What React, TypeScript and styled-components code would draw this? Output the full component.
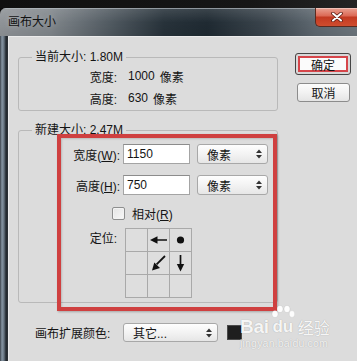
import React from "react";
import styled, { createGlobalStyle } from "styled-components";

const GlobalStyle = createGlobalStyle`
  html, body { margin: 0; padding: 0; background: #0c0c0c; }
  body {
    font-family: "Liberation Sans", "Noto Sans CJK SC", sans-serif;
    font-size: 12px;
    color: #141414;
  }
  * { box-sizing: border-box; }
`;

const Screen = styled.div`
  width: 357px;
  height: 361px;
  overflow: hidden;
  display: flex;
  flex-direction: column;
  background: #0c0c0c;
`;

const TopStrip = styled.div`
  height: 8px;
  flex: none;
  background: linear-gradient(90deg, #101010 0%, #161616 70%, #242424 100%);
`;

const Window = styled.div`
  flex: 1;
  min-height: 0;
  display: flex;
  flex-direction: column;
  border-top-left-radius: 6px;
  overflow: hidden;
`;

const TitleBar = styled.div`
  height: 28px;
  flex: none;
  display: flex;
  align-items: flex-start;
  border-top: 1px solid rgba(190, 196, 202, 0.7);
  background:
    linear-gradient(180deg, rgba(255,255,255,0.12) 0%, rgba(255,255,255,0) 50%, rgba(0,0,0,0.06) 100%),
    linear-gradient(90deg, #8f9397 0%, #80868b 14%, #535c63 30%, #27323a 46%, #1f2a32 58%, #3a444c 74%, #5d676f 88%, #6d767d 100%);
`;

const Title = styled.div`
  padding-left: 8px;
  line-height: 27px;
  font-size: 12px;
  color: #121212;
  text-shadow: 0 0 6px rgba(255, 255, 255, 0.35);
`;

const CloseButton = styled.div`
  margin-left: auto;
  margin-top: -1px;
  width: 42px;
  height: 19px;
  display: flex;
  align-items: center;
  justify-content: center;
  border: 1px solid #5b2a20;
  border-top: none;
  border-right: none;
  border-radius: 0 0 0 5px;
  background: linear-gradient(180deg, #e9a192 0%, #dc6b57 42%, #c33a22 52%, #cf4d2f 100%);
  box-shadow: inset 0 1px 0 rgba(255, 255, 255, 0.35);
`;

const BodyRow = styled.div`
  flex: 1;
  min-height: 0;
  display: flex;
`;

const FrameSide = styled.div`
  width: 8px;
  flex: none;
  background: linear-gradient(90deg, #3b424a 0px, #8796a4 2px, #66737f 4px, #22282e 6px, #2c3136 8px);
`;

const Client = styled.div`
  flex: 1;
  position: relative;
  display: flex;
  align-items: flex-start;
  background: #dcdcdc;
  border-top: 1px solid #ececec;
  border-left: 1px solid #ececec;
`;

const LeftColumn = styled.div`
  display: flex;
  flex-direction: column;
  padding: 13px 0 0 9px;
`;

const RightColumn = styled.div`
  display: flex;
  flex-direction: column;
  align-items: flex-start;
  padding: 16px 0 0 17px;
`;

const Group = styled.fieldset<{ $padTop: number; $padBottom: number; $gap?: number }>`
  margin: ${(p) => p.$gap ?? 0}px 0 0 0;
  padding: ${(p) => p.$padTop}px 0 ${(p) => p.$padBottom}px 0;
  width: 260px;
  min-width: 0;
  border: 1px solid #b9b9b9;
  border-radius: 3px;
`;

const Legend = styled.legend`
  margin-left: 13px;
  padding: 0 3px;
  line-height: 14px;
  font-size: 12px;
  color: #141414;
`;

const InfoRow = styled.div`
  display: flex;
  align-items: center;
  height: 22px;
`;

const InfoLabel = styled.span`
  width: 98px;
  text-align: right;
`;

const InfoValue = styled.span`
  margin-left: 11px;
`;

const InfoUnit = styled.span`
  margin-left: 5px;
`;

const FieldRow = styled.div<{ $top: number }>`
  display: flex;
  align-items: center;
  height: 20px;
  margin-top: ${(p) => p.$top}px;
`;

const FieldLabel = styled.span`
  width: 101px;
  text-align: right;
`;

const Key = styled.span`
  text-decoration: underline;
  text-underline-offset: 1px;
`;

const TextInput = styled.input`
  width: 67px;
  height: 20px;
  margin: 0 0 0 3px;
  padding: 0 0 0 3px;
  border: 1px solid #a4a4a4;
  border-top-color: #8c8c8c;
  background: #ffffff;
  font-family: inherit;
  font-size: 12px;
  color: #141414;
  outline: none;
`;

const SelectBox = styled.div<{ $w: number; $h: number; $left: number }>`
  width: ${(p) => p.$w}px;
  height: ${(p) => p.$h}px;
  margin-left: ${(p) => p.$left}px;
  display: flex;
  align-items: center;
  justify-content: space-between;
  padding: 0 5px 0 9px;
  border: 1px solid #a8a8a8;
  border-radius: 3px;
  background: linear-gradient(180deg, #fefefe 0%, #f3f3f3 50%, #e6e6e6 100%);
`;

const CheckRow = styled.div`
  display: flex;
  align-items: center;
  height: 16px;
  margin-top: 10px;
  padding-left: 93px;
`;

const CheckBox = styled.span`
  width: 13px;
  height: 13px;
  border: 1px solid #8e8f8f;
  border-radius: 2px;
  background: linear-gradient(135deg, #e4e4e4 0%, #f8f8f8 100%);
  box-shadow: inset 0 0 0 1px #f3f3f3;
`;

const CheckLabel = styled.span`
  margin-left: 7px;
`;

const AnchorRow = styled.div`
  display: flex;
  align-items: flex-start;
  margin-top: 7px;
`;

const AnchorLabel = styled.span`
  width: 98px;
  text-align: right;
  line-height: 22px;
`;

const AnchorGrid = styled.div`
  margin-left: 8px;
  display: grid;
  grid-template-columns: repeat(3, 21px);
  grid-auto-rows: 22px;
  gap: 1px;
  padding: 1px;
  background: #a9a9a9;
`;

const AnchorCell = styled.div`
  display: flex;
  align-items: center;
  justify-content: center;
  background: #dedede;
`;

const BottomRow = styled.div`
  display: flex;
  align-items: center;
  height: 19px;
  margin-top: 20px;
  padding-left: 17px;
`;

const BottomLabel = styled.span`
  width: 82px;
`;

const Swatch = styled.span`
  width: 15px;
  height: 15px;
  margin-left: 9px;
  background: #1e1e1e;
  border: 1px solid #4a4a4a;
`;

const DialogButton = styled.div<{ $primary?: boolean; $w: number; $h: number; $top: number; $left: number }>`
  width: ${(p) => p.$w}px;
  height: ${(p) => p.$h}px;
  margin-top: ${(p) => p.$top}px;
  margin-left: ${(p) => p.$left}px;
  display: flex;
  align-items: center;
  justify-content: center;
  border: 1px solid ${(p) => (p.$primary ? "#454545" : "#8c8c8c")};
  border-radius: 3px;
  background: ${(p) =>
    p.$primary ? "#fbfbfb" : "linear-gradient(180deg, #fcfcfc 0%, #f2f2f2 50%, #e4e4e4 100%)"};
  box-shadow: ${(p) => (p.$primary ? "inset 0 0 0 2px #d8d8d8, inset 0 0 0 4px #d6454a" : "none")};
  font-size: 12px;
  color: #141414;
`;

const Annotation = styled.div`
  position: absolute;
  left: 48px;
  top: 97px;
  width: 220px;
  height: 177px;
  border: 4px solid #cf4040;
  box-shadow: 1px 1px 2px rgba(0, 0, 0, 0.25), inset 1px 1px 2px rgba(0, 0, 0, 0.15);
  pointer-events: none;
`;

const Watermark = styled.div`
  position: absolute;
  left: 231px;
  top: 268px;
  display: flex;
  flex-direction: column;
  color: rgba(255, 255, 255, 0.92);
  text-shadow: 0 0 1px rgba(0, 0, 0, 0.3);
  pointer-events: none;
`;

const LogoLine = styled.div`
  display: flex;
  align-items: flex-end;
`;

const LogoWord = styled.span<{ $size: number }>`
  font-family: "Liberation Sans", sans-serif;
  font-weight: bold;
  font-size: ${(p) => p.$size}px;
  line-height: 19px;
  letter-spacing: -0.3px;
`;

const PawWord = styled.span`
  display: inline-flex;
  flex-direction: column;
  align-items: center;
  margin-left: 2px;
`;

const LogoCjk = styled.span`
  font-family: "Noto Sans CJK SC", sans-serif;
  font-size: 16px;
  line-height: 18px;
  margin-left: 3px;
`;

const LogoUrl = styled.span`
  font-family: "Liberation Sans", sans-serif;
  font-size: 10.5px;
  line-height: 12px;
  margin-top: 1px;
  letter-spacing: 0.2px;
  color: rgba(255, 255, 255, 0.85);
`;

const UpDown = () => (
  <svg width="6" height="10" viewBox="0 0 6 10">
    <polygon points="0,4 3,0.5 6,4" fill="#333" />
    <polygon points="0,6 3,9.5 6,6" fill="#333" />
  </svg>
);

type ArrowKind = "left" | "dot" | "downLeft" | "down" | null;

const AnchorIcon = ({ kind }: { kind: ArrowKind }) => {
  if (!kind) return null;
  return (
    <svg width="21" height="22" viewBox="0 0 21 22">
      {kind === "left" && (
        <>
          <polygon points="2,11 9.5,7.3 9.5,14.7" fill="#111" />
          <line x1="9" y1="11" x2="19" y2="11" stroke="#111" strokeWidth="1.7" />
        </>
      )}
      {kind === "dot" && <circle cx="10.5" cy="11" r="3.6" fill="#111" />}
      {kind === "down" && (
        <>
          <polygon points="10.5,19.5 6.8,12 14.2,12" fill="#111" />
          <line x1="10.5" y1="3" x2="10.5" y2="12.5" stroke="#111" strokeWidth="1.7" />
        </>
      )}
      {kind === "downLeft" && (
        <>
          <polygon points="4,18.5 6.3,10.4 12,16.1" fill="#111" />
          <line x1="17" y1="4" x2="8.6" y2="12.4" stroke="#111" strokeWidth="1.8" />
        </>
      )}
    </svg>
  );
};

const anchors: ArrowKind[] = [null, "left", "dot", null, "downLeft", "down", null, null, null];

const CloseGlyph = () => (
  <svg width="12" height="10" viewBox="0 0 12 10">
    <path d="M2 1.5 L10 8.5 M10 1.5 L2 8.5" stroke="#5a1a10" strokeWidth="3.6" strokeLinecap="round" />
    <path d="M2 1.5 L10 8.5 M10 1.5 L2 8.5" stroke="#ffffff" strokeWidth="2" strokeLinecap="round" />
  </svg>
);

const Paw = () => (
  <svg width="24" height="15" viewBox="0 0 24 15" style={{ marginBottom: -3 }}>
    <ellipse cx="4" cy="9" rx="3" ry="3.6" fill="rgba(255,255,255,0.92)" stroke="rgba(0,0,0,0.12)" strokeWidth="0.6" />
    <ellipse cx="9" cy="4" rx="3" ry="3.6" fill="rgba(255,255,255,0.92)" stroke="rgba(0,0,0,0.12)" strokeWidth="0.6" />
    <ellipse cx="16" cy="4" rx="3" ry="3.6" fill="rgba(255,255,255,0.92)" stroke="rgba(0,0,0,0.12)" strokeWidth="0.6" />
    <ellipse cx="21" cy="9" rx="2.8" ry="3.4" fill="rgba(255,255,255,0.92)" stroke="rgba(0,0,0,0.12)" strokeWidth="0.6" />
  </svg>
);

export default function App() {
  return (
    <>
      <GlobalStyle />
      <Screen>
        <TopStrip />
        <Window>
          <TitleBar>
            <Title>画布大小</Title>
            <CloseButton>
              <CloseGlyph />
            </CloseButton>
          </TitleBar>
          <BodyRow>
            <FrameSide />
            <Client>
              <LeftColumn>
                <Group $padTop={1} $padBottom={1}>
                  <Legend>当前大小: 1.80M</Legend>
                  <InfoRow>
                    <InfoLabel>宽度:</InfoLabel>
                    <InfoValue>1000</InfoValue>
                    <InfoUnit>像素</InfoUnit>
                  </InfoRow>
                  <InfoRow>
                    <InfoLabel>高度:</InfoLabel>
                    <InfoValue>630</InfoValue>
                    <InfoUnit>像素</InfoUnit>
                  </InfoRow>
                </Group>
                <Group $padTop={7} $padBottom={4} $gap={12}>
                  <Legend>新建大小: 2.47M</Legend>
                  <FieldRow $top={0}>
                    <FieldLabel>
                      宽度(<Key>W</Key>):
                    </FieldLabel>
                    <TextInput readOnly value="1150" />
                    <SelectBox $w={71} $h={20} $left={7}>
                      <span>像素</span>
                      <UpDown />
                    </SelectBox>
                  </FieldRow>
                  <FieldRow $top={11}>
                    <FieldLabel>
                      高度(<Key>H</Key>):
                    </FieldLabel>
                    <TextInput readOnly value="750" />
                    <SelectBox $w={71} $h={20} $left={7}>
                      <span>像素</span>
                      <UpDown />
                    </SelectBox>
                  </FieldRow>
                  <CheckRow>
                    <CheckBox />
                    <CheckLabel>
                      相对(<Key>R</Key>)
                    </CheckLabel>
                  </CheckRow>
                  <AnchorRow>
                    <AnchorLabel>定位:</AnchorLabel>
                    <AnchorGrid>
                      {anchors.map((a, i) => (
                        <AnchorCell key={i}>
                          <AnchorIcon kind={a} />
                        </AnchorCell>
                      ))}
                    </AnchorGrid>
                  </AnchorRow>
                </Group>
                <BottomRow>
                  <BottomLabel>画布扩展颜色:</BottomLabel>
                  <SelectBox $w={95} $h={19} $left={6}>
                    <span>其它...</span>
                    <UpDown />
                  </SelectBox>
                  <Swatch />
                </BottomRow>
              </LeftColumn>
              <RightColumn>
                <DialogButton $primary $w={56} $h={22} $top={0} $left={0}>
                  确定
                </DialogButton>
                <DialogButton $w={53} $h={19} $top={8} $left={2}>
                  取消
                </DialogButton>
              </RightColumn>
              <Annotation />
              <Watermark>
                <LogoLine>
                  <LogoWord $size={19}>Bai</LogoWord>
                  <PawWord>
                    <Paw />
                    <LogoWord $size={17}>du</LogoWord>
                  </PawWord>
                  <LogoCjk>经验</LogoCjk>
                </LogoLine>
                <LogoUrl>jingyan.baidu.com</LogoUrl>
              </Watermark>
            </Client>
          </BodyRow>
        </Window>
      </Screen>
    </>
  );
}
